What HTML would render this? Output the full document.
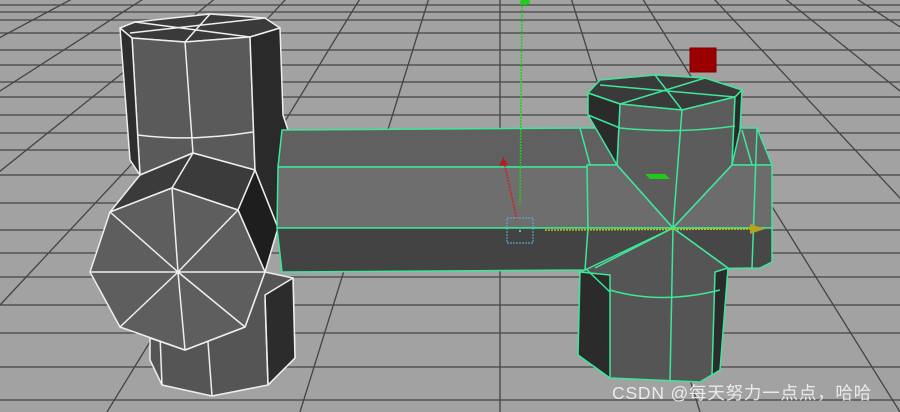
<!DOCTYPE html>
<html><head><meta charset="utf-8"><style>
html,body{margin:0;padding:0;background:#a0a0a0;overflow:hidden}
svg{display:block}
</style></head><body>
<svg width="900" height="412" viewBox="0 0 900 412" xmlns="http://www.w3.org/2000/svg">
<rect width="900" height="412" fill="#a2a2a2"/>
<g stroke="#444" stroke-width="1.3" fill="none">
<path d="M0 5H900M0 12H900M0 20H900M0 33H900M0 50H900M0 65H900M0 82H900M0 97H900M0 115H900M0 133H900M0 150H900M0 175H900M0 203H900M0 230H900M0 253H900M0 277H900M0 305H900M0 333H900M0 367H900M0 400H900"/>
<path d="M500 -230L-700 412M500 -230L-500 412M500 -230L-300 412M500 -230L-100 412M500 -230L107 412M500 -230L300 412M500 -230L500 412M500 -230L700 412M500 -230L900 412M500 -230L1100 412M500 -230L1300 412M500 -230L1500 412M500 -230L1700 412"/>
</g>
<g stroke="#eee" stroke-width="1.5" stroke-linejoin="round">
<polygon points="120,28 135,22 210,14 265,18 280,28 250,37 185,42 132,38" fill="#3a3a3a"/>
<polygon points="132,38 185,42 250,37 255,170 193,153 140,175" fill="#5a5a5a"/>
<polygon points="120,28 132,38 140,175 130,160" fill="#2e2e2e"/>
<polygon points="250,37 280,28 283,115 288,130 278,228 255,170" fill="#2a2a2a"/>
<path d="M185,42 L193,153 M138,135 Q190,142 253,132 M185,42 L210,14 M135,22 L250,37 M130,33 L265,18" fill="none"/>
<polygon points="150,330 150,360 162,385 212,396 268,385 295,358 293,278 265,272 245,327 185,350 150,338" fill="#555"/>
<polygon points="265,295 293,278 295,358 268,385" fill="#2c2c2c"/>
<path d="M160,335 L162,385 M208,342 L212,396 M265,300 L268,385" fill="none"/>
<polygon points="110,212 140,175 193,153 255,170 238,210 172,188" fill="#3b3b3b"/>
<polygon points="238,210 255,170 278,228 265,272" fill="#1e1e1e"/>
<polygon points="90,272 110,212 172,188 238,210 265,272 245,327 185,350 120,327" fill="#5e5e5e"/>
<path d="M178,272 L90,272 M178,272 L110,212 M178,272 L172,188 M178,272 L238,210 M178,272 L265,272 M178,272 L245,327 M178,272 L185,350 M178,272 L120,327 M172,188 L193,153" fill="none"/>
</g>
<g stroke="#3ee69a" stroke-width="1.5" stroke-linejoin="round">
<polygon points="282,130 590,128 590,167 278,167" fill="#606060"/>
<polygon points="278,167 590,167 590,228 277,228" fill="#6e6e6e"/>
<polygon points="277,228 590,228 590,270 282,272" fill="#434343"/>
<polygon points="580,128 757,128 772,165 590,165" fill="#606060"/>
<polygon points="587,165 772,165 772,228 588,228" fill="#6c6c6c"/>
<polygon points="588,228 772,228 772,262 760,268 585,270" fill="#474747"/>
<path d="M757,128 L752,268 M742,130 L752,165" fill="none"/>
<polygon points="588,93 600,80 655,75 705,78 742,90 735,97 682,110 620,104" fill="#3a3a3a"/>
<polygon points="620,104 682,110 735,97 732,165 673,228 617,165" fill="#5c5c5c"/>
<polygon points="588,93 620,104 617,165 588,115" fill="#2b2b2b"/>
<polygon points="735,97 742,90 740,130 732,165" fill="#2b2b2b"/>
<path d="M655,75 L682,110 M600,85 L735,97 M620,104 L705,78 M620,128 Q680,134 735,126 M588,115 L620,128" fill="none"/>
<polygon points="585,270 673,228 728,268 725,272 720,370 700,382 610,378 578,355 580,272" fill="#555"/>
<polygon points="580,272 610,275 610,378 578,355" fill="#2b2b2b"/>
<polygon points="715,272 728,268 720,370 712,375" fill="#2b2b2b"/>
<path d="M673,228 L617,165 M673,228 L732,165 M673,228 L682,110 M673,228 L595,268 M673,228 L728,268 M673,228 L670,382 M610,290 Q660,305 720,290 M585,268 L610,292" fill="none"/>
</g>
<rect x="690" y="48" width="26" height="24" fill="#9a0000" stroke="#7a0000"/>
<line x1="522" y1="3" x2="520" y2="205" stroke="#1bcf1b" stroke-width="1.5" stroke-dasharray="2 1"/>
<ellipse cx="525" cy="2" rx="5" ry="3" fill="#1bcf1b"/>
<line x1="545" y1="230" x2="760" y2="229" stroke="#d4c000" stroke-width="1.5" stroke-dasharray="2 1"/>
<polygon points="750,224 765,229 750,234" fill="#b8a020"/>
<line x1="517" y1="220" x2="504" y2="162" stroke="#d02020" stroke-width="1.5" stroke-dasharray="2 1"/>
<polygon points="499,166 503,157 508,165" fill="#b02020"/>
<rect x="507" y="218" width="26" height="25" fill="none" stroke="#5ab0e0" stroke-width="1" stroke-dasharray="2 1"/>
<rect x="519" y="230" width="2" height="2" fill="#5ab0e0"/>
<polygon points="645,174 665,174 670,179 650,179" fill="#1ec81e"/>
<text x="612" y="399" font-family="Liberation Sans, Noto Sans CJK SC, sans-serif" font-size="17.5" letter-spacing="0.8" fill="#f2f2f2" opacity="0.9">CSDN @每天努力一点点，哈哈</text>
</svg>
</body></html>
